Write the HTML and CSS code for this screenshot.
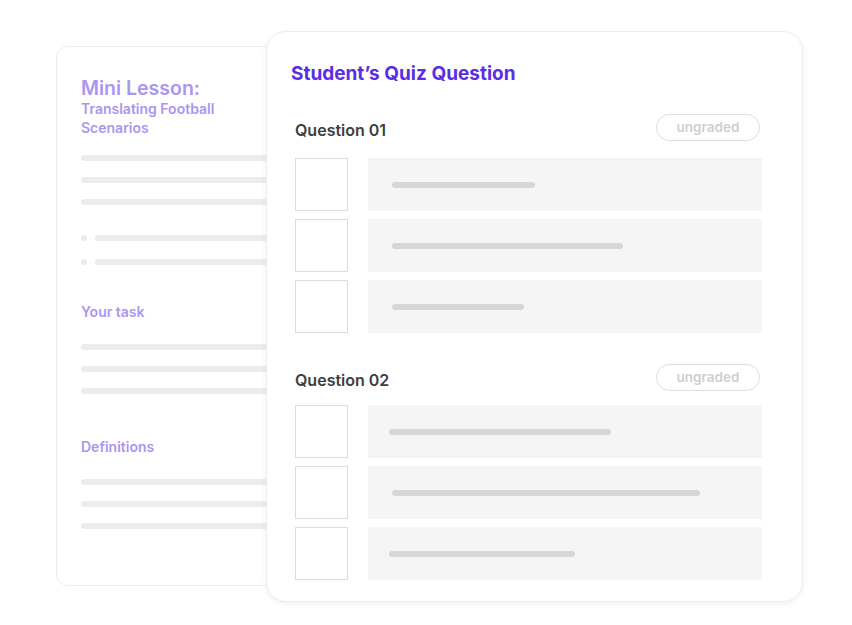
FILE: index.html
```html
<!DOCTYPE html>
<html lang="en">
  <head>
    <meta charset="utf-8">
    <title>Student's Quiz Question</title>
    <link rel="stylesheet" href="styles.css">
  </head>
  <body>
    <div class="stage">

      <!-- Mini lesson card (behind) -->
      <div class="lesson-card">
        <h2 class="lesson-title">Mini Lesson:</h2>
        <p class="lesson-subtitle">Translating Football<br>Scenarios</p>

        <div class="lines">
          <span class="line"></span>
          <span class="line"></span>
          <span class="line"></span>
        </div>

        <ul class="bullets">
          <li><span class="dot"></span><span class="line"></span></li>
          <li><span class="dot"></span><span class="line"></span></li>
        </ul>

        <h3 class="lesson-heading task-heading">Your task</h3>
        <div class="lines">
          <span class="line"></span>
          <span class="line"></span>
          <span class="line"></span>
        </div>

        <h3 class="lesson-heading def-heading">Definitions</h3>
        <div class="lines">
          <span class="line"></span>
          <span class="line"></span>
          <span class="line"></span>
        </div>
      </div>

      <!-- Quiz card (front) -->
      <div class="quiz-card">
        <h1 class="quiz-title">Student’s Quiz Question</h1>

        <div class="question">
          <div class="question-head">
            <span class="question-name">Question 01</span>
            <span class="pill">ungraded</span>
          </div>
          <div class="answer">
            <span class="box"></span>
            <div class="answer-bar"><span class="bar-line" style="width:143px"></span></div>
          </div>
          <div class="answer">
            <span class="box"></span>
            <div class="answer-bar"><span class="bar-line" style="width:231px"></span></div>
          </div>
          <div class="answer">
            <span class="box"></span>
            <div class="answer-bar"><span class="bar-line" style="width:132px"></span></div>
          </div>
        </div>

        <div class="question">
          <div class="question-head">
            <span class="question-name">Question 02</span>
            <span class="pill">ungraded</span>
          </div>
          <div class="answer">
            <span class="box"></span>
            <div class="answer-bar shift"><span class="bar-line" style="width:222px"></span></div>
          </div>
          <div class="answer">
            <span class="box"></span>
            <div class="answer-bar"><span class="bar-line" style="width:308px"></span></div>
          </div>
          <div class="answer">
            <span class="box"></span>
            <div class="answer-bar shift"><span class="bar-line" style="width:186px"></span></div>
          </div>
        </div>
      </div>

    </div>
  </body>
</html>
```

FILE: styles.css
```css
body {
  margin: 0;
  background-color: #fff;
  font-family: Inter, "Noto Sans", sans-serif;
}

/* Both cards share one grid cell and overlap */
.stage {
  display: grid;
  width: 852px;
  height: 625px;
}

.lesson-card,
.quiz-card {
  grid-area: 1 / 1;
  box-sizing: border-box;
  background-color: #fff;
}

/* Style for the mini lesson card */
.lesson-card {
  margin: 46px 0 0 56px;
  width: 300px;
  height: 540px;
  padding: 30px 0 0 24px;
  border: 1px solid #ececec;
  border-radius: 12px;
}

.lesson-title {
  margin: 0;
  font-size: 19.5px;
  line-height: 22px;
  font-weight: 600;
  color: #ab95f1;
}

.lesson-subtitle {
  margin: 0;
  font-size: 14px;
  line-height: 19px;
  font-weight: 600;
  color: #ab95f1;
}

.lesson-heading {
  margin: 0;
  font-size: 14px;
  line-height: 18px;
  font-weight: 600;
  color: #ab95f1;
}

.lines {
  display: flex;
  flex-direction: column;
  gap: 16px;
}

.line {
  display: block;
  height: 6px;
  border-radius: 3px;
  background-color: #ececec;
}

.lesson-card > .lines:nth-of-type(1) {
  margin-top: 18px;
}

.bullets {
  list-style: none;
  margin: 30px 0 0;
  padding: 0;
  display: flex;
  flex-direction: column;
  gap: 18px;
}

.bullets li {
  display: flex;
  align-items: center;
  gap: 8px;
}

.bullets .dot {
  width: 6px;
  height: 6px;
  border-radius: 50%;
  background-color: #ececec;
}

.bullets .line {
  flex: 1;
}

.task-heading {
  margin-top: 38px;
}

.def-heading {
  margin-top: 44px;
}

.lesson-heading + .lines {
  margin-top: 23px;
}

/* Style for the quiz card */
.quiz-card {
  position: relative;
  margin: 31px 0 0 266px;
  width: 537px;
  height: 571px;
  padding: 62px 40px 0 28px;
  border: 1px solid #ededed;
  border-radius: 20px;
  box-shadow: 0 2px 6px rgba(0, 0, 0, 0.06);
}

.quiz-title {
  margin: -31px 0 0 -4px;
  font-size: 19px;
  line-height: 22px;
  font-weight: 700;
  color: #5a2ee4;
}

.question {
  display: flex;
  flex-direction: column;
  gap: 8px;
  margin-top: 29px;
}

.question + .question {
  margin-top: 31px;
}

.question-head {
  display: flex;
  justify-content: space-between;
  align-items: center;
  height: 27px;
  margin-bottom: 9px;
}

.question + .question .question-head {
  margin-bottom: 6px;
}

.question-name {
  font-size: 16px;
  font-weight: 600;
  color: #3e3e3e;
  padding-top: 4px;
}

.pill {
  box-sizing: border-box;
  width: 104px;
  height: 27px;
  margin-right: 2px;
  border: 1px solid #dedede;
  border-radius: 14px;
  text-align: center;
  font-size: 13.5px;
  line-height: 25px;
  font-weight: 600;
  color: #cfcfcf;
}

.answer {
  display: flex;
  gap: 20px;
  height: 53px;
}

.box {
  box-sizing: border-box;
  width: 53px;
  height: 53px;
  border: 1px solid #dcdcdc;
}

.answer-bar {
  flex: 1;
  display: flex;
  align-items: center;
  padding-left: 24px;
  background-color: #f5f5f5;
}

.answer-bar.shift {
  padding-left: 21px;
}

.bar-line {
  display: block;
  height: 6px;
  border-radius: 3px;
  background-color: #d6d6d6;
}
```
